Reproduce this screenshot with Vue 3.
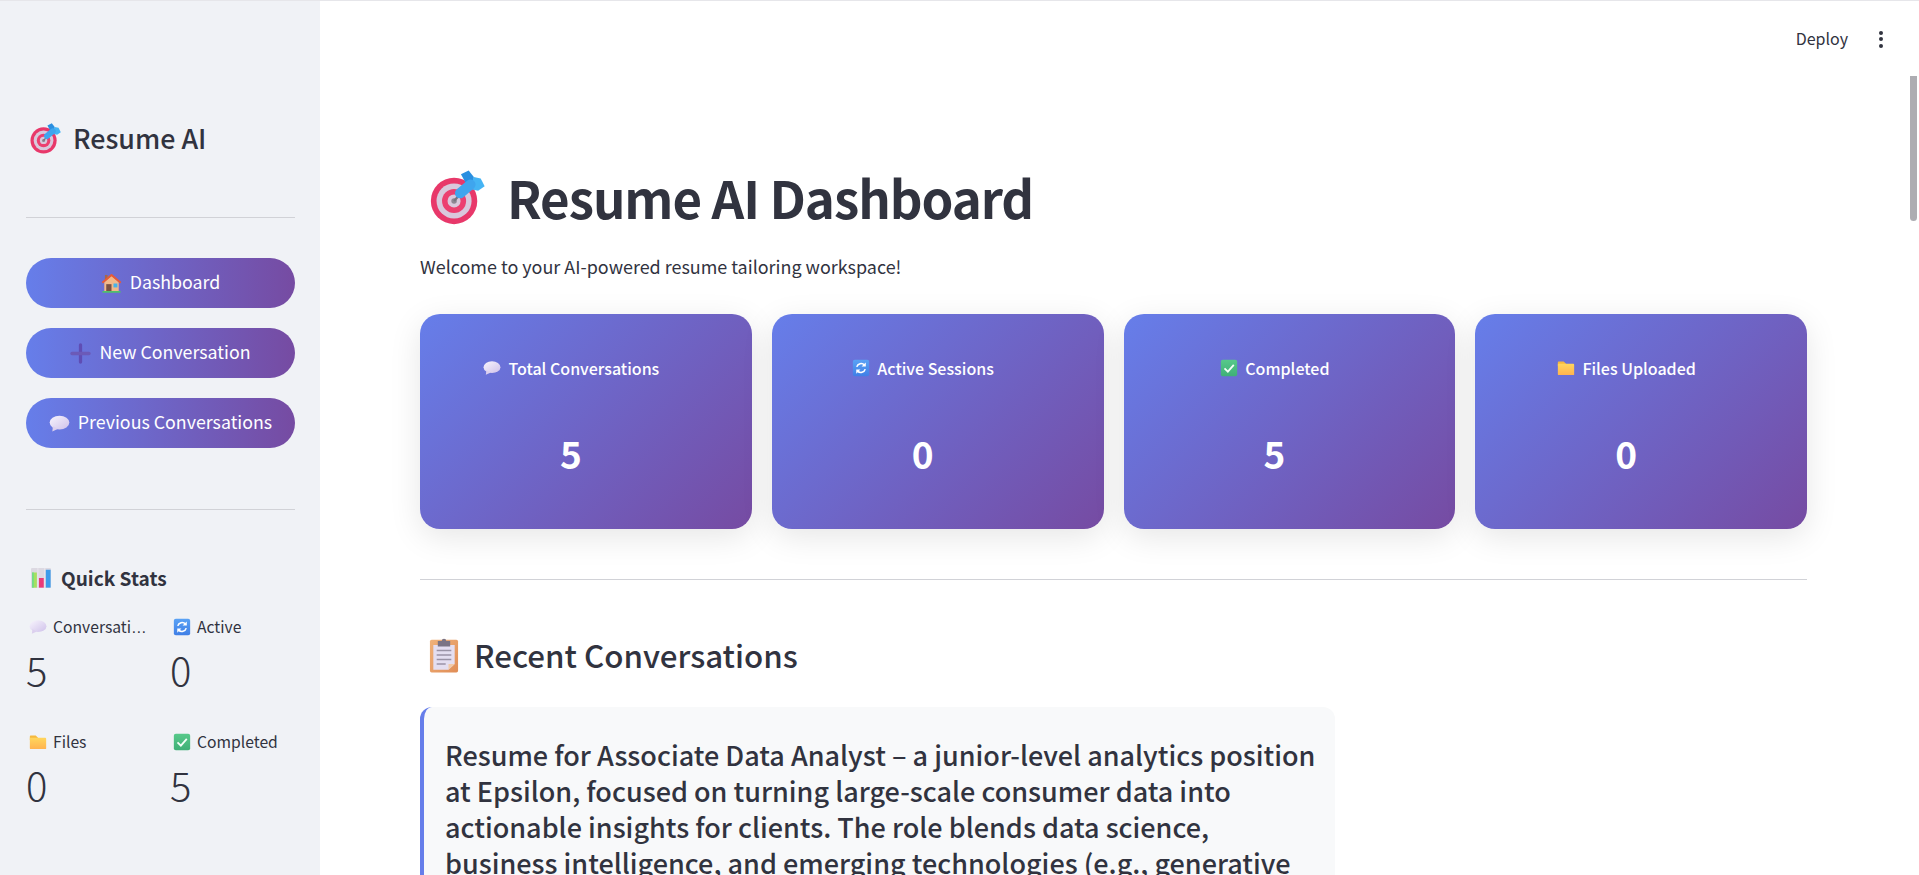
<script setup>
const navButtons = [
  { icon: 'house', label: 'Dashboard' },
  { icon: 'plus', label: 'New Conversation' },
  { icon: 'speech', label: 'Previous Conversations' }
]
const sideStats = [
  { icon: 'speech', label: 'Conversati', clipped: true, value: 5 },
  { icon: 'refresh', label: 'Active', value: 0 },
  { icon: 'folder', label: 'Files', value: 0 },
  { icon: 'check', label: 'Completed', value: 5 }
]
const cards = [
  { icon: 'speech', label: 'Total Conversations', value: 5 },
  { icon: 'refresh', label: 'Active Sessions', value: 0 },
  { icon: 'check', label: 'Completed', value: 5 },
  { icon: 'folder', label: 'Files Uploaded', value: 0 }
]
</script>

<template>
  <svg class="defs" width="0" height="0" aria-hidden="true">
    <defs>
      <linearGradient id="blueTile" x1="0" y1="0" x2="0" y2="1"><stop offset="0" stop-color="#5aa2f5"/><stop offset="1" stop-color="#3f7fe6"/></linearGradient>
      <linearGradient id="greenTile" x1="0" y1="0" x2="0" y2="1"><stop offset="0" stop-color="#57c98a"/><stop offset="1" stop-color="#3fb077"/></linearGradient>
      <linearGradient id="folderFill" x1="0" y1="0" x2="0" y2="1"><stop offset="0" stop-color="#ffd65c"/><stop offset="1" stop-color="#ffb350"/></linearGradient>
      <linearGradient id="speechFill" x1="0" y1="0" x2="1" y2="1"><stop offset="0" stop-color="#f8f5fd"/><stop offset="1" stop-color="#cfc1ea"/></linearGradient>
      <linearGradient id="boardFill" x1="0" y1="0" x2="1" y2="1"><stop offset="0" stop-color="#f0b27a"/><stop offset="1" stop-color="#e08d56"/></linearGradient>

      <symbol id="target" viewBox="0 0 32 32">
        <circle cx="14" cy="18" r="13.5" fill="#e8386a"/>
        <circle cx="14" cy="18" r="10.2" fill="#d9c8dc"/>
        <circle cx="14" cy="18" r="7" fill="#ec3f70"/>
        <circle cx="14" cy="18" r="3.8" fill="#d9c8dc"/>
        <circle cx="14" cy="18" r="1.6" fill="#8f8794"/>
        <path d="M14 18 L18 13.5" stroke="#77757f" stroke-width="1.4"/>
        <path d="M18 2.5 L22.5 0.3 L25.5 4 L25 10.5 L21 8Z" fill="#2a8fe0"/>
        <path d="M25.5 4 L29.5 5 L31.8 9.5 L28 12 L23 11Z" fill="#45b4f4"/>
        <path d="M17.5 13.5 L23.5 8.5" fill="none" stroke="#3fa5ee" stroke-width="6" stroke-linecap="round"/>
      </symbol>

      <symbol id="house" viewBox="0 0 32 32">
        <rect x="6" y="3" width="4" height="9" fill="#a8674a"/>
        <path d="M5 14 L16 4 L27 14 V28 H5Z" fill="#f2b98a"/>
        <rect x="8" y="17" width="8" height="11" fill="#7a5145"/>
        <rect x="19" y="16" width="6" height="6" fill="#45b4ea"/>
        <path d="M2 15 L16 3 L30 15" fill="none" stroke="#e85a35" stroke-width="3" stroke-linejoin="round"/>
        <rect x="2" y="27.5" width="28" height="2.5" rx="1" fill="#4fc06a"/>
      </symbol>

      <symbol id="plus" viewBox="0 0 32 32">
        <path d="M16 3 V29" stroke="#5f4db4" stroke-width="5" stroke-linecap="round"/>
        <path d="M3 16 H29" stroke="#6b5ab8" stroke-width="5" stroke-linecap="round"/>
      </symbol>

      <symbol id="speech" viewBox="0 0 32 32">
        <ellipse cx="16" cy="14.5" rx="15" ry="10.5" fill="url(#speechFill)"/>
        <path d="M6 20 L5 28 L14 24Z" fill="#dcd0ee"/>
      </symbol>

      <symbol id="refresh" viewBox="0 0 32 32">
        <rect x="1.5" y="1.5" width="29" height="29" rx="3.5" fill="url(#blueTile)"/>
        <path d="M8.5 14 A8 8 0 0 1 22 10.5" fill="none" stroke="#fff" stroke-width="2.8"/>
        <path d="M24.5 6 V13.5 H17Z" fill="#fff"/>
        <path d="M23.5 18 A8 8 0 0 1 10 21.5" fill="none" stroke="#fff" stroke-width="2.8"/>
        <path d="M7.5 26 V18.5 H15Z" fill="#fff"/>
      </symbol>

      <symbol id="check" viewBox="0 0 32 32">
        <rect x="1.5" y="1.5" width="29" height="29" rx="3.5" fill="url(#greenTile)"/>
        <path d="M8 16.5 L14 22.5 L24.5 10.5" fill="none" stroke="#f4fff8" stroke-width="3.2"/>
      </symbol>

      <symbol id="folder" viewBox="0 0 32 32">
        <path d="M1.5 6 a1.5 1.5 0 0 1 1.5 -1.5 h9 l4 4 v4 h-14.5Z" fill="#f5b93f"/>
        <path d="M1.5 8.5 H29 a1.5 1.5 0 0 1 1.5 1.5 V27 a1.5 1.5 0 0 1 -1.5 1.5 H3 a1.5 1.5 0 0 1 -1.5 -1.5Z" fill="url(#folderFill)"/>
      </symbol>

      <symbol id="chart" viewBox="0 0 32 32">
        <rect x="1.5" y="1.5" width="29" height="29" rx="1.5" fill="#dcd9e2"/>
        <path d="M11.5 1.5 v29 M21.5 1.5 v29" stroke="#f0eef3" stroke-width="1"/>
        <rect x="3" y="8" width="7" height="22" fill="#a5e05f"/>
        <rect x="3" y="8" width="2.5" height="22" fill="#6fdc88"/>
        <rect x="13" y="16" width="7" height="14" fill="#ea3a78"/>
        <rect x="23" y="4" width="7" height="26" fill="#3d9bea"/>
      </symbol>

      <symbol id="clipboard" viewBox="0 0 28 32">
        <rect x="1.5" y="2.5" width="25" height="29" rx="1.5" fill="url(#boardFill)"/>
        <path d="M4.5 7 H23.5 V24 L18 29 H4.5Z" fill="#e4def0"/>
        <path d="M18 29 V24 H23.5Z" fill="#f2c9a6"/>
        <path d="M8.5 3.5 h3.5 a2 2 0 0 1 4 0 h3.5 v5 h-11Z" fill="#7b7484"/>
        <path d="M7.5 12 H20.5 M7.5 16 H20.5 M7.5 20 H20.5 M7.5 24 H15.5" stroke="#9a93a6" stroke-width="1.2"/>
      </symbol>
    </defs>
  </svg>

  <div class="app">
    <aside class="sidebar">
      <div class="brand">
        <svg class="ico brand-ico"><use href="#target"/></svg>
        <span>Resume AI</span>
      </div>
      <hr class="rule first-rule" />
      <nav class="nav">
        <button v-for="b in navButtons" :key="b.label" class="nav-btn" type="button">
          <svg class="ico nav-ico"><use :href="'#' + b.icon"/></svg>
          <span class="nav-text">{{ b.label }}</span>
        </button>
      </nav>
      <hr class="rule second-rule" />
      <h3 class="stats-title">
        <svg class="ico stats-ico"><use href="#chart"/></svg>
        <span>Quick Stats</span>
      </h3>
      <div class="stats-grid">
        <div v-for="s in sideStats" :key="s.label" class="metric">
          <div class="metric-label">
            <svg class="ico metric-ico"><use :href="'#' + s.icon"/></svg>
            <span class="metric-text">{{ s.label }}<span v-if="s.clipped" class="dots">…</span></span>
          </div>
          <div class="metric-value">{{ s.value }}</div>
        </div>
      </div>
    </aside>

    <main class="main">
      <header class="topbar">
        <span class="deploy">Deploy</span>
        <span class="kebab"><i></i><i></i><i></i></span>
      </header>

      <div class="content">
        <h1 class="title">
          <svg class="ico title-ico"><use href="#target"/></svg>
          <span>Resume AI Dashboard</span>
        </h1>
        <p class="welcome">Welcome to your AI-powered resume tailoring workspace!</p>

        <section class="cards">
          <article v-for="c in cards" :key="c.label" class="card">
            <div class="card-label">
              <svg class="ico card-ico"><use :href="'#' + c.icon"/></svg>
              <span>{{ c.label }}</span>
            </div>
            <div class="card-value">{{ c.value }}</div>
          </article>
        </section>

        <hr class="rule main-rule" />

        <h2 class="recent">
          <svg class="ico recent-ico"><use href="#clipboard"/></svg>
          <span>Recent Conversations</span>
        </h2>

        <article class="conv">
          Resume for Associate Data Analyst – a junior-level analytics position at Epsilon, focused on turning large-scale consumer data into actionable insights for clients. The role blends data science, business intelligence, and emerging technologies (e.g., generative
        </article>
      </div>

      <div class="scrollbar"></div>
    </main>
  </div>
</template>

<style>
html, body { margin: 0; height: 100%; overflow: hidden; background: #fff; }
</style>

<style scoped>
.defs { position: absolute; }
.app {
  display: flex;
  height: 875px;
  overflow: hidden;
  box-sizing: border-box;
  border-top: 1px solid #e6e6ea;
  font-family: "Noto Sans CJK SC", "Noto Sans", sans-serif;
  color: #31333f;
  background: #fff;
}
.ico { display: block; flex: none; }
.sidebar {
  width: 320px;
  flex: none;
  box-sizing: border-box;
  background: #f0f2f6;
  padding: 0 25px 0 26px;
}
.brand {
  display: flex;
  align-items: center;
  gap: 12px;
  height: 36px;
  margin-top: 119px;
  font-size: 26.8px;
  font-weight: 500;
  line-height: 36px;
  white-space: nowrap;
}
.brand-ico { width: 31px; height: 31px; margin-left: 4px; }
.rule { border: 0; margin: 0; height: 1px; background: #d1d2d7; }
.first-rule { margin-top: 61px; }
.nav { display: flex; flex-direction: column; gap: 20px; margin-top: 40px; }
.nav-btn {
  display: flex;
  align-items: center;
  justify-content: center;
  gap: 8px;
  height: 50px;
  border: 0;
  padding: 0;
  border-radius: 25px;
  background: linear-gradient(90deg, #667eea 0%, #764ba2 100%);
  color: #fff;
  font: 400 17.8px/24px "Noto Sans CJK SC", "Noto Sans", sans-serif;
  white-space: nowrap;
}
.nav-text { margin-bottom: 4px; }
.nav-ico { width: 21px; height: 21px; }
.second-rule { margin-top: 61px; }
.stats-title {
  display: flex;
  align-items: center;
  gap: 9px;
  margin: 53px 0 0;
  height: 30px;
  font-size: 19.1px;
  font-weight: 600;
  line-height: 30px;
}
.stats-ico { width: 22px; height: 22px; margin-left: 4px; }
.stats-grid {
  display: grid;
  grid-template-columns: 129px 129px;
  column-gap: 15px;
  row-gap: 39px;
  margin-top: 24px;
}
.metric-label {
  display: flex;
  align-items: center;
  gap: 6px;
  height: 20px;
  font-size: 15.7px;
  line-height: 20px;
}
.metric-ico { width: 18px; height: 18px; margin-left: 3px; }
.metric-text { white-space: nowrap; }
.dots { font-family: "Liberation Sans", sans-serif; }
.metric-value {
  margin-top: 8px;
  height: 48px;
  font-size: 40px;
  line-height: 48px;
  font-weight: 300;
}
.main {
  position: relative;
  flex: 1;
  min-width: 0;
  overflow: hidden;
}
.topbar {
  display: flex;
  align-items: center;
  justify-content: flex-end;
  height: 76px;
  padding-right: 36px;
  gap: 31px;
  box-sizing: border-box;
}
.deploy { font-size: 16px; line-height: 20px; margin-bottom: 2px; }
.kebab { display: flex; flex-direction: column; gap: 2.5px; width: 4px; }
.kebab i { display: block; width: 4px; height: 4px; border-radius: 50%; background: #31333f; }
.content {
  box-sizing: border-box;
  width: 1387px;
  margin-left: 100px;
}
.title {
  display: flex;
  align-items: center;
  gap: 22px;
  margin: 85px 0 0;
  height: 70px;
  font-size: 51px;
  letter-spacing: -1.05px;
  font-weight: 700;
  line-height: 70px;
  white-space: nowrap;
}
.title-ico { width: 55px; height: 55px; margin-left: 10px; }
.welcome {
  margin: 21px 0 0;
  font-size: 17.95px;
  line-height: 26px;
}
.cards {
  display: grid;
  grid-template-columns: repeat(4, 1fr);
  column-gap: 20px;
  margin-top: 35px;
}
.card {
  height: 215px;
  box-sizing: border-box;
  border-radius: 20px;
  padding: 42px 30px 0 0;
  background: linear-gradient(135deg, #667eea 0%, #764ba2 100%);
  box-shadow: 0 8px 32px rgba(0, 0, 0, 0.1);
  color: #fff;
  text-align: center;
}
.card-label {
  display: flex;
  align-items: center;
  justify-content: center;
  gap: 7px;
  height: 24px;
  padding-left: 1px;
  font-size: 16px;
  font-weight: 500;
  line-height: 24px;
}
.card-ico { width: 18px; height: 18px; }
.card-value {
  margin-top: 48px;
  font-size: 37px;
  line-height: 50px;
  font-weight: 700;
}
.main-rule { margin-top: 50px; }
.recent {
  display: flex;
  align-items: center;
  gap: 14px;
  margin: 52px 0 0;
  height: 46px;
  font-size: 31.3px;
  font-weight: 500;
  line-height: 46px;
  white-space: nowrap;
}
.recent-ico { width: 32px; height: 36px; margin-left: 8px; }
.conv {
  box-sizing: border-box;
  width: 915px;
  height: 300px;
  margin-top: 29px;
  padding: 30px 16px 0 21px;
  border-left: 4px solid #667eea;
  border-radius: 12px;
  background: #f8f9fa;
  font-size: 27px;
  font-weight: 500;
  line-height: 36px;
}
.scrollbar {
  position: absolute;
  top: 75px;
  right: 2px;
  width: 7px;
  height: 145px;
  border-radius: 0 0 4px 4px;
  background: #adadb2;
}
</style>
